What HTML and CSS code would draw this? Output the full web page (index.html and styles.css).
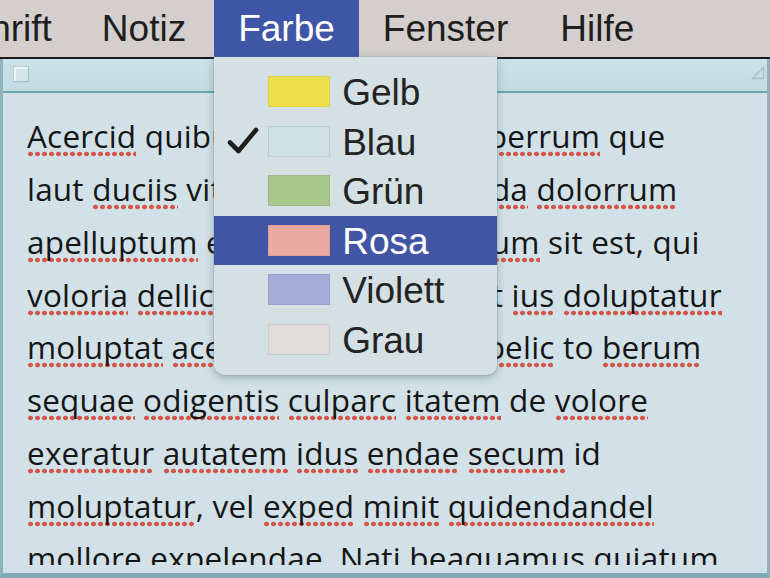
FILE: index.html
```html
<!DOCTYPE html>
<html lang="de">
<head>
<meta charset="utf-8">
<title>Notizzettel – Farbe</title>
<link rel="stylesheet" href="styles.css">
</head>
<body>
  <nav class="menubar">
    <div class="mi mi-first">Schrift</div>
    <div class="mi">Notiz</div>
    <div class="mi mi-active">Farbe
      <ul class="dropdown">
        <li class="item"><span class="check"></span><span class="swatch sw-gelb"></span><span class="label">Gelb</span></li>
        <li class="item"><span class="check"><svg width="32" height="28" viewBox="0 0 32 28"><path d="M3 15.5 L11.5 24 L29 3" fill="none" stroke="#1e1e1e" stroke-width="4.6" stroke-linecap="round" stroke-linejoin="round"/></svg></span><span class="swatch sw-blau"></span><span class="label">Blau</span></li>
        <li class="item"><span class="check"></span><span class="swatch sw-gruen"></span><span class="label">Grün</span></li>
        <li class="item item-hl"><span class="check"></span><span class="swatch sw-rosa"></span><span class="label">Rosa</span></li>
        <li class="item"><span class="check"></span><span class="swatch sw-violett"></span><span class="label">Violett</span></li>
        <li class="item"><span class="check"></span><span class="swatch sw-grau"></span><span class="label">Grau</span></li>
      </ul>
    </div>
    <div class="mi mi-after">Fenster</div>
    <div class="mi mi-last">Hilfe</div>
  </nav>

  <main class="window">
    <header class="titlebar">
      <span class="closebox"></span>
      <span class="growbox"><svg width="14" height="14" viewBox="0 0 14 14"><path d="M1.5 12.5 L12.5 1.5 L12.5 12.5 Z" fill="none" stroke="#a9c2c8" stroke-width="1.4"/></svg></span>
    </header>
    <section class="content">
      <div class="text">
        <div class="ln"><span class="sp">Acercid</span> quibusande nobis ius <span class="sp">aperrum</span> que</div>
        <div class="ln">laut <span class="sp">duciis</span> vitatur aliquid nobis <span class="sp">da</span> <span class="sp">dolorrum</span></div>
        <div class="ln"><span class="sp">apelluptum</span> eatemque aut <span class="sp">quatum</span> sit est, qui</div>
        <div class="ln"><span class="sp">voloria</span> <span class="sp">dellicia</span> nostris sinvenitat <span class="sp">ius</span> <span class="sp">doluptatur</span></div>
        <div class="ln"><span class="sp">moluptat</span> <span class="sp">acerumque</span> quis aut <span class="sp">ipelic</span> to <span class="sp">berum</span></div>
        <div class="ln"><span class="sp">sequae</span> <span class="sp">odigentis</span> <span class="sp">culparc</span> <span class="sp">itatem</span> de <span class="sp">volore</span></div>
        <div class="ln"><span class="sp">exeratur</span> <span class="sp">autatem</span> <span class="sp">idus</span> <span class="sp">endae</span> <span class="sp">secum</span> id</div>
        <div class="ln"><span class="sp">moluptatur</span>, vel <span class="sp">exped</span> <span class="sp">minit</span> <span class="sp">quidendandel</span></div>
        <div class="ln"><span class="sp">mollore</span> <span class="sp">expelendae</span>. <span class="sp">Nati</span> <span class="sp">beaquamus</span> <span class="sp">quiatum</span></div>
      </div>
    </section>
  </main>
</body>
</html>
```
FILE: styles.css
```css
* { box-sizing: border-box; }
html, body { margin: 0; padding: 0; }
body {
  width: 770px;
  height: 578px;
  overflow: hidden;
  background: #d1e1e7;
  font-family: "Liberation Sans", Arial, sans-serif;
  color: #1d1d1d;
}

/* ---------- menu bar ---------- */
.menubar {
  display: flex;
  height: 59px;
  background: #d4cfcd;
  border-bottom: 2px solid #1b1b1b;
  font-size: 37px;
  line-height: 57px;
  white-space: nowrap;
}
.mi {
  padding: 0 24px;
  height: 57px;
  color: #1e1e1e;
}
.mi-first { margin-left: -77px; }
.mi + .mi { margin-left: 2px; }
.mi-active {
  position: relative;
  background: #3f56a6;
  color: #fff;
}
.mi + .mi-active { margin-left: 4px; }
.mi + .mi-after { margin-left: 0; }
.mi + .mi-last { margin-left: 4px; }

/* ---------- dropdown ---------- */
.dropdown {
  position: absolute;
  left: 0;
  top: 57px;
  z-index: 5;
  width: 283px;
  margin: 0;
  padding: 10px 0 11px;
  list-style: none;
  background: #d4e0e4;
  border-radius: 0 0 10px 10px;
  box-shadow: 0 3px 8px rgba(60, 80, 90, 0.35), 0 0 0 0.5px rgba(120, 140, 150, 0.4);
}
.item {
  display: flex;
  align-items: center;
  height: 49.5px;
  color: #232323;
  line-height: 1;
}
.item-hl {
  background: #4255a4;
  color: #fff;
}
.check {
  width: 54px;
  height: 30px;
  padding-left: 13px;
  display: flex;
  align-items: center;
}
.swatch {
  width: 62px;
  height: 31px;
  border: 1px solid rgba(0, 0, 0, 0.06);
}
.sw-gelb { background: #ece04c; }
.sw-blau { background: #cfe0e7; border-color: #b7ccd4; }
.sw-gruen { background: #a6c68b; }
.sw-rosa { background: #e9aaa1; }
.sw-violett { background: #a5acd8; }
.sw-grau { background: #e1dddd; border-color: #cfcccc; }
.label {
  margin-left: 12px;
  font-size: 37px;
  position: relative;
  top: 1px;
}

/* ---------- window ---------- */
.window {
  height: 519px;
  display: flex;
  flex-direction: column;
  border-left: 3px solid #8db4be;
  border-right: 3px solid #8db4be;
  border-bottom: 5px solid #7eaab5;
}
.titlebar {
  height: 34px;
  flex: none;
  display: flex;
  align-items: center;
  justify-content: space-between;
  padding: 0 2px 0 10px;
  background: linear-gradient(#c9e2e7, #c2dce2);
  border-bottom: 2px solid #6aa6ad;
}
.closebox {
  width: 16px;
  height: 16px;
  margin-top: -2px;
  border: 1.5px solid #b6cdd2;
  border-right-color: #a4bcc2;
  border-bottom-color: #a4bcc2;
  background: #d3e5e9;
  box-shadow: inset 2px 2px 0 #eef6f8;
}
.growbox {
  display: flex;
  margin-top: -4px;
}
.content {
  flex: 1;
  padding: 17.4px 0 0 24px;
  overflow: hidden;
}
.text {
  height: 454.6px;
  overflow: hidden;
  font-family: "Open Sans", "DejaVu Sans", sans-serif;
  font-size: 31.5px;
  letter-spacing: 0.2px;
  line-height: 52.75px;
  color: #151515;
  white-space: nowrap;
}
.sp {
  background-image: radial-gradient(circle, #d4574c 0, #d4574c 2.1px, transparent 2.7px);
  background-size: 7px 6px;
  background-repeat: repeat-x;
  background-position: 0 100%;
}
```
